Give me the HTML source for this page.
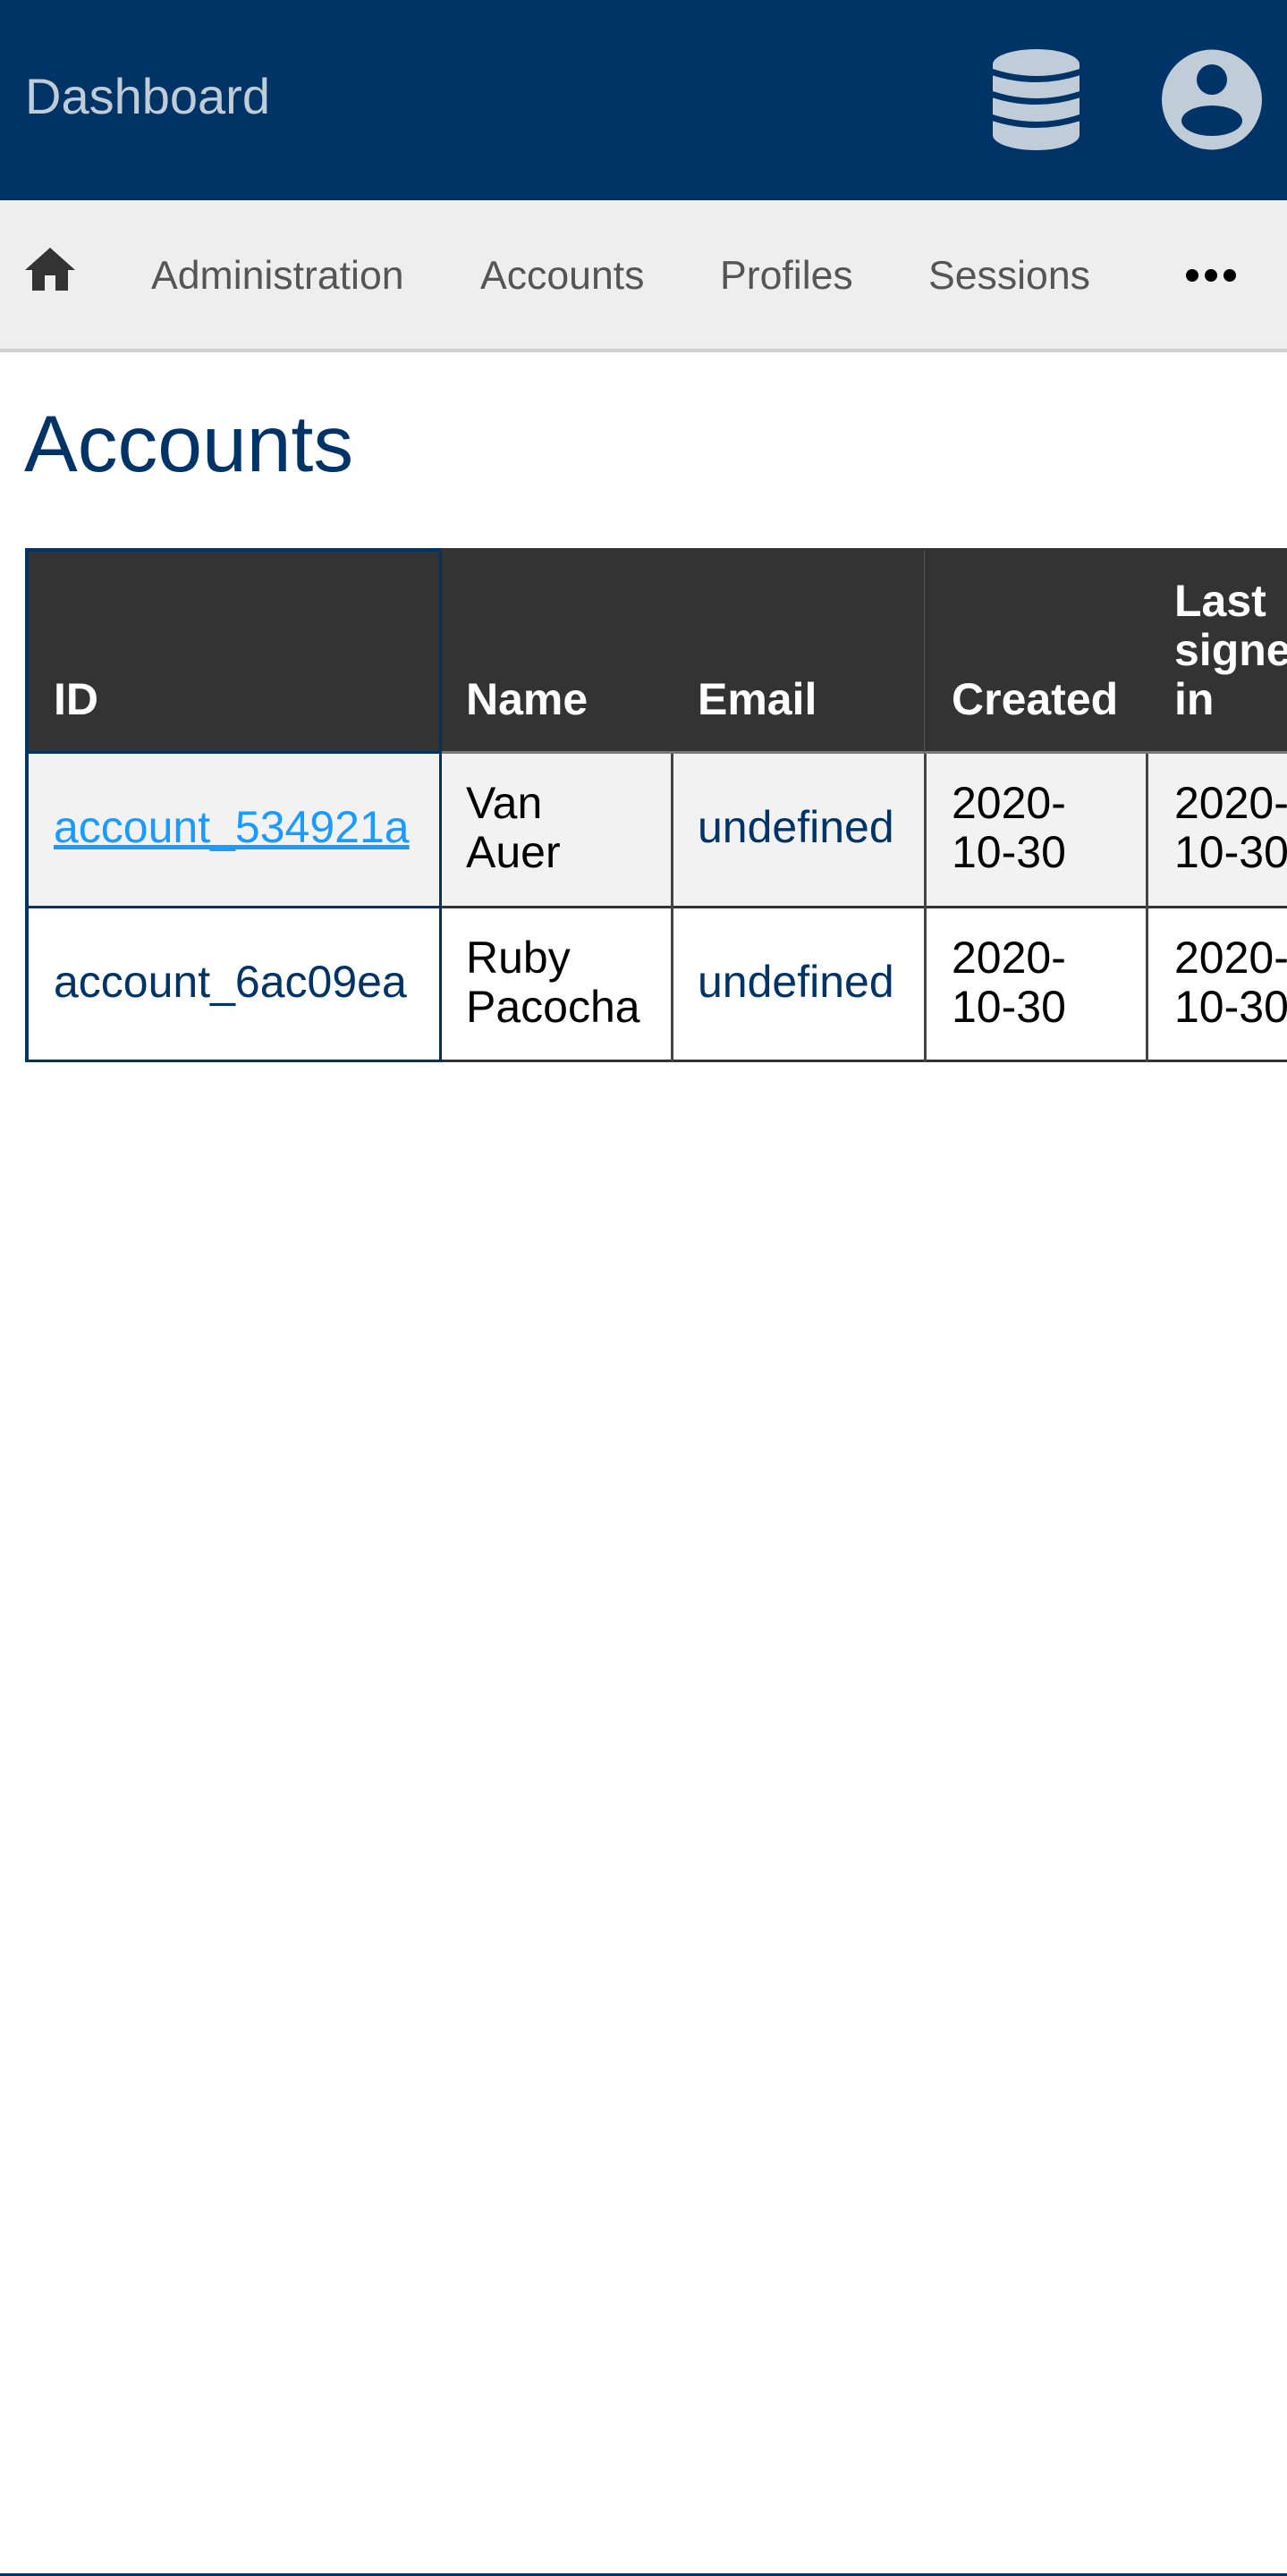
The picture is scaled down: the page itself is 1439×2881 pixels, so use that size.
<!DOCTYPE html>
<html><head><meta charset="utf-8">
<style>
html,body{margin:0;padding:0;width:1439px;height:2881px;overflow:hidden;background:#fff;font-family:"Liberation Sans",Arial,sans-serif;}
.a{position:absolute;white-space:nowrap;}
.t{font-size:50px;line-height:55px;}
.h{font-weight:bold;color:#fff;}
.nav{font-size:44.6px;line-height:44px;color:#555;top:287px;}
</style></head><body>
<!-- header -->
<div class="a" style="left:0;top:0;width:1439px;height:224px;background:#003366;"></div>
<div class="a" style="left:28px;top:80px;font-size:56px;line-height:56px;color:#c0ccd8;">Dashboard</div>
<svg class="a" style="left:1110px;top:55px" width="97" height="114" viewBox="0 0 97 114">
 <path d="M0 17 A48.5 17 0 0 1 97 17 V96 A48.5 17 0 0 1 0 96 Z" fill="#c0ccd8"/>
 <g fill="none" stroke="#003366" stroke-width="7">
  <path d="M-2 25 Q48.5 42 99 25"/>
  <path d="M-2 50 Q48.5 67 99 50"/>
  <path d="M-2 76 Q48.5 93 99 76"/>
 </g>
</svg>
<svg class="a" style="left:1299px;top:55px" width="112" height="113" viewBox="0 0 112 113">
 <circle cx="56" cy="56.5" r="56" fill="#c0ccd8"/>
 <circle cx="56" cy="34" r="17" fill="#003366"/>
 <ellipse cx="56" cy="80" rx="34" ry="17" fill="#003366"/>
</svg>
<!-- nav -->
<div class="a" style="left:0;top:224px;width:1439px;height:166px;background:#eeeeee;"></div>
<div class="a" style="left:0;top:390px;width:1439px;height:4px;background:#d0d0d0;"></div>
<svg class="a" style="left:28px;top:277px" width="56" height="49" viewBox="0 0 56 49">
 <path d="M28 0 L56 25 H48 V48 H34 V31 H22 V48 H8 V25 H0 Z" fill="#333"/>
</svg>
<div class="a nav" style="left:169px;">Administration</div>
<div class="a nav" style="left:537px;">Accounts</div>
<div class="a nav" style="left:805px;">Profiles</div>
<div class="a nav" style="left:1038px;">Sessions</div>
<svg class="a" style="left:1320px;top:298px" width="70" height="20"><g fill="#000"><circle cx="13" cy="10" r="7"/><circle cx="34" cy="10" r="7"/><circle cx="55" cy="10" r="7"/></g></svg>
<!-- title -->
<div class="a" style="left:27px;top:452px;font-size:89.5px;line-height:89.5px;color:#003366;">Accounts</div>
<!-- table backgrounds -->
<div class="a" style="left:28px;top:613px;width:1411px;height:229px;background:#333;"></div>
<div class="a" style="left:28px;top:842px;width:1411px;height:172px;background:#f2f2f2;"></div>
<!-- horizontal lines -->
<div class="a" style="left:494px;top:840px;width:945px;height:3px;background:#777;"></div>
<div class="a" style="left:494px;top:1013px;width:945px;height:3px;background:#333;"></div>
<div class="a" style="left:494px;top:1185px;width:945px;height:3px;background:#333;"></div>
<div class="a" style="left:28px;top:613px;width:466px;height:4px;background:#003366;"></div>
<div class="a" style="left:28px;top:840px;width:466px;height:3px;background:#003366;"></div>
<div class="a" style="left:28px;top:1013px;width:466px;height:3px;background:#003366;"></div>
<div class="a" style="left:28px;top:1185px;width:466px;height:3px;background:#003366;"></div>
<!-- vertical lines -->
<div class="a" style="left:28px;top:613px;width:4px;height:575px;background:#003366;"></div>
<div class="a" style="left:491px;top:613px;width:3px;height:575px;background:#003366;"></div>
<div class="a" style="left:750px;top:843px;width:3px;height:345px;background:#444;"></div>
<div class="a" style="left:1033px;top:616px;width:1px;height:226px;background:#555;"></div>
<div class="a" style="left:1033px;top:843px;width:3px;height:345px;background:#444;"></div>
<div class="a" style="left:1281px;top:843px;width:3px;height:345px;background:#444;"></div>
<!-- header text -->
<div class="a t h" style="left:60px;top:755px;">ID</div>
<div class="a t h" style="left:521px;top:755px;">Name</div>
<div class="a t h" style="left:780px;top:755px;">Email</div>
<div class="a t h" style="left:1064px;top:755px;">Created</div>
<div class="a t h" style="left:1313px;top:645px;">Last<br>signed<br>in</div>
<!-- row1 -->
<div class="a t" style="left:60px;top:898px;color:#1a9bff;text-decoration:underline;">account_534921a</div>
<div class="a t" style="left:521px;top:871px;color:#000;">Van<br>Auer</div>
<div class="a t" style="left:780px;top:898px;color:#003366;">undefined</div>
<div class="a t" style="left:1064px;top:871px;color:#000;">2020-<br>10-30</div>
<div class="a t" style="left:1313px;top:871px;color:#000;">2020-<br>10-30</div>
<!-- row2 -->
<div class="a t" style="left:60px;top:1071px;color:#003366;">account_6ac09ea</div>
<div class="a t" style="left:521px;top:1044px;color:#000;">Ruby<br>Pacocha</div>
<div class="a t" style="left:780px;top:1071px;color:#003366;">undefined</div>
<div class="a t" style="left:1064px;top:1044px;color:#000;">2020-<br>10-30</div>
<div class="a t" style="left:1313px;top:1044px;color:#000;">2020-<br>10-30</div>
<!-- bottom line -->
<div class="a" style="left:0;top:2878px;width:1439px;height:3px;background:#003366;"></div>
</body></html>
